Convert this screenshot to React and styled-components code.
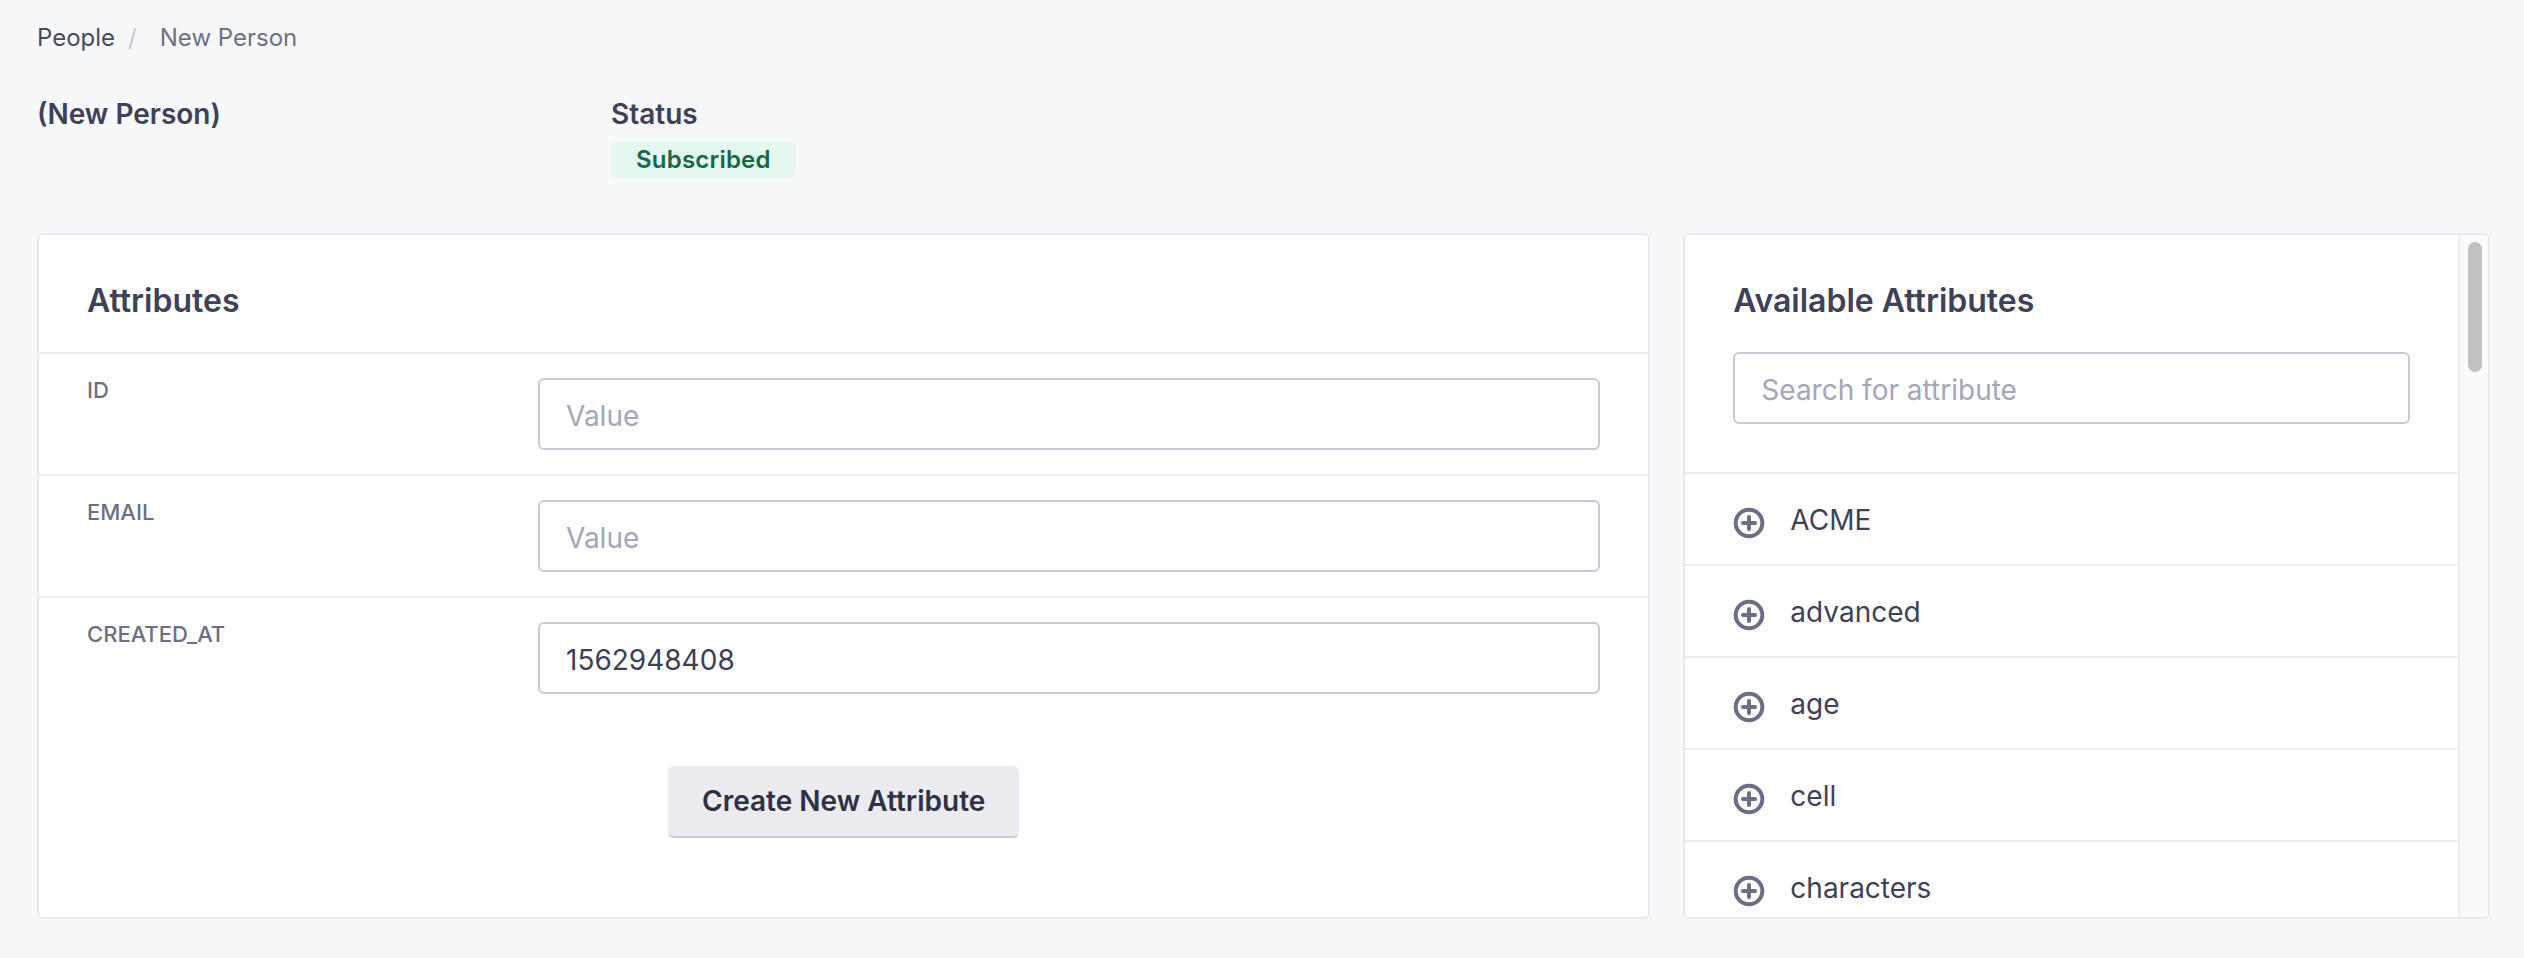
import React from "react";
import styled, { createGlobalStyle } from "styled-components";

const GlobalStyle = createGlobalStyle`
  html, body {
    margin: 0;
    padding: 0;
    background: #f7f8fa;
  }
  body {
    font-family: Inter, "Noto Sans", "Liberation Sans", sans-serif;
    color: #3c3e55;
    -webkit-font-smoothing: antialiased;
  }
  * { box-sizing: border-box; }
`;

const Page = styled.div`
  padding: 22px 34px 0 37px;
  min-height: 958px;
`;

const Breadcrumb = styled.nav`
  display: flex;
  align-items: center;
  height: 32px;
  font-size: 24px;
  line-height: 32px;
`;

const Crumb = styled.span`
  color: ${(p) => (p.$current ? "#6d7088" : "#474a61")};
`;

const CrumbSep = styled.span`
  color: #c5c7d3;
  margin: 0 23px 0 13px;
`;

const SummaryRow = styled.div`
  display: grid;
  grid-template-columns: 574px auto;
  margin-top: 42px;
`;

const SummaryTitle = styled.div`
  font-size: 28px;
  line-height: 36px;
  font-weight: 600;
  color: #3f4157;
`;

const StatusBlock = styled.div`
  display: flex;
  flex-direction: column;
  align-items: flex-start;
`;

const Badge = styled.span`
  display: inline-flex;
  align-items: center;
  height: 36px;
  margin-top: 10px;
  padding: 0 25px;
  border-radius: 6px;
  background: #e5f8f0;
  color: #176848;
  font-size: 24px;
  line-height: 36px;
  font-weight: 600;
  letter-spacing: 0.2px;
`;

const Cards = styled.div`
  display: grid;
  grid-template-columns: 2fr 1fr;
  gap: 33px;
  height: 686px;
  margin-top: 55px;
`;

const Card = styled.section`
  background: #ffffff;
  border: 2px solid #e8e9ee;
  border-radius: 6px;
  height: 100%;
  overflow: hidden;
`;

const ScrollCard = styled(Card)`
  display: flex;
`;

const ScrollBody = styled.div`
  flex: 1;
  min-width: 0;
  overflow: hidden;
`;

const ScrollTrack = styled.div`
  flex: none;
  width: 30px;
  padding: 7px 6px 0 8px;
  background: #fafafa;
  border-left: 2px solid #ececef;
`;

const ScrollThumb = styled.div`
  width: 100%;
  border-radius: 8px;
  background: #c1c1c1;
`;

const CardHeader = styled.header`
  padding: 46px 48px ${(p) => (p.$compact ? "31px" : "48px")};
  border-bottom: 2px solid #ececf1;
`;

const CardTitle = styled.h2`
  margin: 0;
  font-size: 32px;
  line-height: 40px;
  font-weight: 600;
  color: #3f4157;
`;

const FieldRow = styled.div`
  display: grid;
  grid-template-columns: 451px 1fr;
  align-items: start;
  padding: 24px 48px;

  & + & {
    border-top: 2px solid #ececf1;
  }
`;

const FieldLabel = styled.label`
  font-size: 22px;
  line-height: 24px;
  font-weight: 500;
  color: #6c6f86;
  text-transform: uppercase;
`;

const TextInput = styled.input`
  display: block;
  width: 100%;
  height: 72px;
  margin: ${(p) => (p.$spaced ? "31px 0 0" : "0")};
  padding: 4px 26px 0;
  border: 2px solid #c9c9d9;
  border-radius: 6px;
  background: #ffffff;
  font-family: inherit;
  font-size: 28px;
  color: #3d3f55;
  outline: none;

  &::placeholder {
    color: #a4a6bb;
  }
`;

const Footer = styled.div`
  display: flex;
  justify-content: center;
  padding-top: 48px;
`;

const Button = styled.button`
  height: 72px;
  padding: 0 34px;
  border: none;
  border-bottom: 2px solid #c9c8d6;
  border-radius: 6px;
  background: #ebebf0;
  font-family: inherit;
  font-size: 28px;
  font-weight: 600;
  color: #2f3146;
  cursor: pointer;
`;

const AttrList = styled.ul`
  list-style: none;
  margin: 0;
  padding: 0;
`;

const AttrItem = styled.li`
  display: flex;
  align-items: center;
  gap: 25px;
  height: 92px;
  padding: 0 48px;
  border-bottom: 2px solid #ececf1;
`;

const AttrIcon = styled.svg`
  flex: none;
  width: 32px;
  height: 32px;
  margin-top: 8px;
  color: #6b6f86;
`;

const AttrName = styled.span`
  font-size: 28px;
  line-height: 36px;
  margin-top: 2px;
  color: #3f4257;
`;

const PlusCircle = () => (
  <AttrIcon viewBox="0 0 24 24" fill="none" stroke="currentColor" strokeWidth="3" strokeLinecap="round">
    <circle cx="12" cy="12" r="10" />
    <line x1="12" y1="7.5" x2="12" y2="16.5" />
    <line x1="7.5" y1="12" x2="16.5" y2="12" />
  </AttrIcon>
);

const fields = [
  { name: "ID", value: "" },
  { name: "EMAIL", value: "" },
  { name: "CREATED_AT", value: "1562948408" },
];

const attributes = ["ACME", "advanced", "age", "cell", "characters"];

// fraction of the attribute list visible in the panel (drives the scroll thumb size)
const visibleFraction = 0.19;
const trackHeight = 682;

export default function App() {
  return (
    <>
      <GlobalStyle />
      <Page>
        <Breadcrumb>
          <Crumb>People</Crumb>
          <CrumbSep>/</CrumbSep>
          <Crumb $current>New Person</Crumb>
        </Breadcrumb>

        <SummaryRow>
          <SummaryTitle>(New Person)</SummaryTitle>
          <StatusBlock>
            <SummaryTitle>Status</SummaryTitle>
            <Badge>Subscribed</Badge>
          </StatusBlock>
        </SummaryRow>

        <Cards>
          <Card>
            <CardHeader $compact>
              <CardTitle>Attributes</CardTitle>
            </CardHeader>
            {fields.map((f) => (
              <FieldRow key={f.name}>
                <FieldLabel>{f.name}</FieldLabel>
                <TextInput placeholder="Value" defaultValue={f.value} />
              </FieldRow>
            ))}
            <Footer>
              <Button type="button">Create New Attribute</Button>
            </Footer>
          </Card>

          <ScrollCard>
            <ScrollBody>
              <CardHeader>
                <CardTitle>Available Attributes</CardTitle>
                <TextInput $spaced placeholder="Search for attribute" />
              </CardHeader>
              <AttrList>
                {attributes.map((a) => (
                  <AttrItem key={a}>
                    <PlusCircle />
                    <AttrName>{a}</AttrName>
                  </AttrItem>
                ))}
              </AttrList>
            </ScrollBody>
            <ScrollTrack>
              <ScrollThumb style={{ height: Math.round(trackHeight * visibleFraction) }} />
            </ScrollTrack>
          </ScrollCard>
        </Cards>
      </Page>
    </>
  );
}
